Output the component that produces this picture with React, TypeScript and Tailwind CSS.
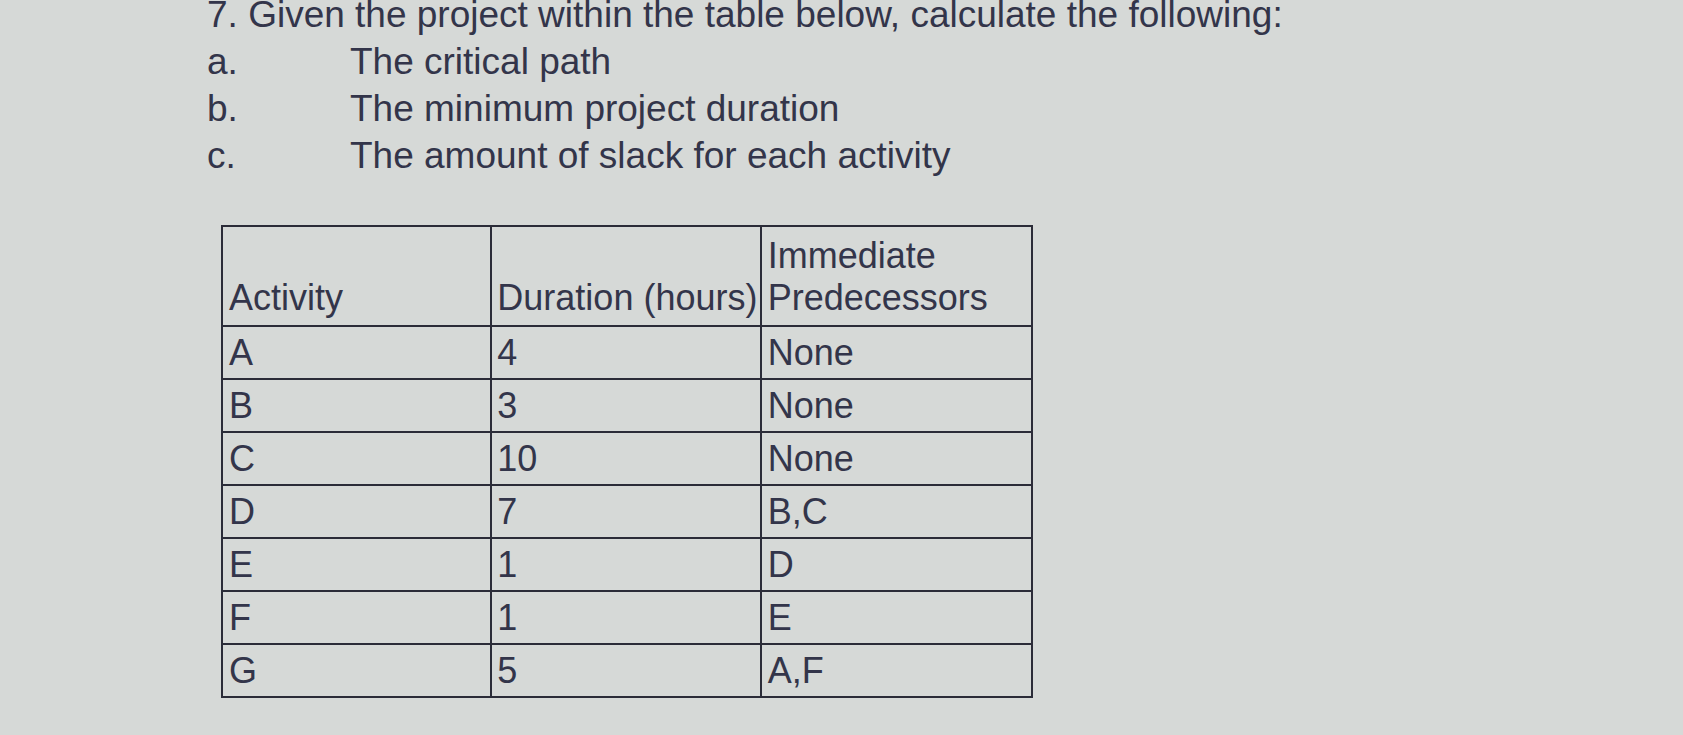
import React from 'react';

const rows = [
  { activity: 'A', duration: '4', preds: 'None' },
  { activity: 'B', duration: '3', preds: 'None' },
  { activity: 'C', duration: '10', preds: 'None' },
  { activity: 'D', duration: '7', preds: 'B,C' },
  { activity: 'E', duration: '1', preds: 'D' },
  { activity: 'F', duration: '1', preds: 'E' },
  { activity: 'G', duration: '5', preds: 'A,F' },
];

const items = [
  { label: 'a.', text: 'The critical path' },
  { label: 'b.', text: 'The minimum project duration' },
  { label: 'c.', text: 'The amount of slack for each activity' },
];

const App: React.FC = () => {
  return (
    <div className="h-[735px] w-full overflow-hidden bg-[#d6d9d7] font-['Liberation_Sans',Arial,sans-serif] text-[#33354a]">
      <div className="pl-[207px]">
        {/* question heading, top of it is cut off in the photo */}
        <p className="-mt-[9px] text-[37px] leading-[47px]">
          7. Given the project within the table below, calculate the following:
        </p>

        <div className="grid grid-cols-[143px_1fr] text-[37px] leading-[47px]">
          {items.map((item) => (
            <React.Fragment key={item.label}>
              <span>{item.label}</span>
              <span>{item.text}</span>
            </React.Fragment>
          ))}
        </div>

        {/* activity table */}
        <div className="ml-[14px] mt-[46px] w-[812px] border-2 border-[#2b2c38] text-[36px] leading-[42px]">
          <div className="grid grid-cols-3">
            <div className="flex h-[100px] items-end border-b-2 border-r-2 border-[#2b2c38] pb-[6px] pl-[6px]">
              Activity
            </div>
            <div className="flex h-[100px] items-end border-b-2 border-r-2 border-[#2b2c38] pb-[6px] pl-[5px]">
              Duration (hours)
            </div>
            <div className="flex h-[100px] flex-col justify-end border-b-2 border-[#2b2c38] pb-[6px] pl-[6px]">
              <span>Immediate</span>
              <span>Predecessors</span>
            </div>

            {rows.map((row, i) => {
              const last = i === rows.length - 1;
              return (
                <React.Fragment key={row.activity}>
                  <div
                    className={`flex items-end border-r-2 border-[#2b2c38] pb-[4px] pl-[6px] ${last ? 'h-[51px]' : 'h-[53px] border-b-2'}`}
                  >
                    {row.activity}
                  </div>
                  <div
                    className={`flex items-end border-r-2 border-[#2b2c38] pb-[4px] pl-[5px] ${last ? 'h-[51px]' : 'h-[53px] border-b-2'}`}
                  >
                    {row.duration}
                  </div>
                  <div
                    className={`flex items-end border-[#2b2c38] pb-[4px] pl-[6px] ${last ? 'h-[51px]' : 'h-[53px] border-b-2'}`}
                  >
                    {row.preds}
                  </div>
                </React.Fragment>
              );
            })}
          </div>
        </div>
      </div>
    </div>
  );
};

export default App;
